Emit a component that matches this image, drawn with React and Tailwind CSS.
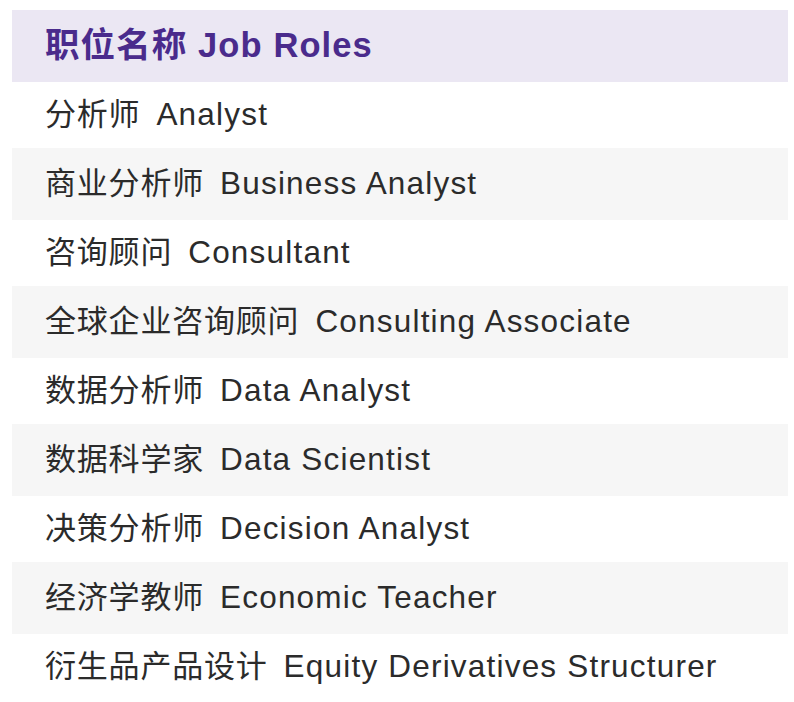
const roles = [
  ['分析师', 'Analyst'],
  ['商业分析师', 'Business Analyst'],
  ['咨询顾问', 'Consultant'],
  ['全球企业咨询顾问', 'Consulting Associate'],
  ['数据分析师', 'Data Analyst'],
  ['数据科学家', 'Data Scientist'],
  ['决策分析师', 'Decision Analyst'],
  ['经济学教师', 'Economic Teacher'],
  ['衍生品产品设计', 'Equity Derivatives Structurer'],
];

export default function App() {
  return (
    <div
      className="w-[794px] h-[702px] overflow-hidden bg-white pt-[10px] pl-[12px] pr-[6px]"
      style={{ fontFamily: '"Liberation Sans", "Noto Sans CJK SC", sans-serif' }}
    >
      <div className="flex h-[72px] items-center bg-[#ebe7f3] pl-[33px] text-[34.5px] tracking-[1.1px] font-semibold text-[#4a2b8c]">
        职位名称 Job Roles
      </div>
      {roles.map(([zh, en], i) => (
        <div
          key={en}
          className={
            i % 2 === 1
              ? 'flex h-[72px] items-center bg-[#f6f6f6] pl-[33px] text-[#2b2b2b]'
              : 'flex h-[66px] items-center bg-white pl-[33px] text-[#2b2b2b]'
          }
        >
          <span className="text-[31px] tracking-[0.8px]">{zh}</span>
          <span className="ml-[16px] text-[31.5px] tracking-[1.2px]">{en}</span>
        </div>
      ))}
    </div>
  );
}
